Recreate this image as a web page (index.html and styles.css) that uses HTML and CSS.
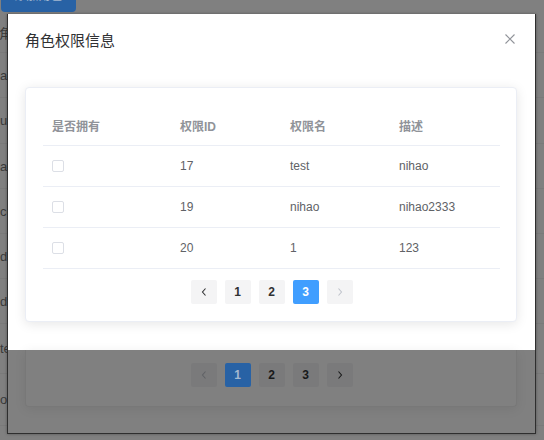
FILE: index.html
```html
<!DOCTYPE html>
<html lang="zh">
<head>
<meta charset="utf-8">
<title>角色权限信息</title>
<link rel="stylesheet" href="styles.css">
</head>
<body>
<div class="page">
  <div class="topbtn">添加角色</div>
  <div class="list">
    <div class="row h41"><span class="lbl cjk">角色</span></div>
    <div class="row h45"><span class="lbl">admin</span></div>
    <div class="row h46"><span class="lbl">user</span></div>
    <div class="row h45"><span class="lbl">abc</span></div>
    <div class="row h45"><span class="lbl">cc</span></div>
    <div class="row h45"><span class="lbl">dd</span></div>
    <div class="row h45"><span class="lbl">dd</span></div>
    <div class="row h50"><span class="lbl">test</span></div>
    <div class="row h52"><span class="lbl">oo</span></div>
  </div>
</div>

<div class="frame">
  <div class="dialog">
    <div class="dlg-header">
      <span class="dlg-title">角色权限信息</span>
      <span class="dlg-close">
        <svg width="12" height="12" viewBox="0 0 12 12"><path d="M1.5 1.5L10.5 10.5M10.5 1.5L1.5 10.5" stroke="#909399" stroke-width="1.1" fill="none"/></svg>
      </span>
    </div>
    <div class="dlg-body">
      <div class="card">
        <div class="table">
          <div class="tr th">
            <div class="td">是否拥有</div>
            <div class="td">权限ID</div>
            <div class="td">权限名</div>
            <div class="td">描述</div>
          </div>
          <div class="tr">
            <div class="td"><span class="cb"></span></div>
            <div class="td">17</div>
            <div class="td">test</div>
            <div class="td">nihao</div>
          </div>
          <div class="tr">
            <div class="td"><span class="cb"></span></div>
            <div class="td">19</div>
            <div class="td">nihao</div>
            <div class="td">nihao2333</div>
          </div>
          <div class="tr">
            <div class="td"><span class="cb"></span></div>
            <div class="td">20</div>
            <div class="td">1</div>
            <div class="td">123</div>
          </div>
        </div>
        <div class="pager">
          <span class="pbtn"><svg width="8" height="10" viewBox="0 0 8 10"><path d="M5.5 1.5L2.5 5L5.5 8.5" stroke="#303133" stroke-width="1.1" fill="none"/></svg></span>
          <span class="pbtn">1</span>
          <span class="pbtn">2</span>
          <span class="pbtn active">3</span>
          <span class="pbtn"><svg width="8" height="10" viewBox="0 0 8 10"><path d="M2.5 1.5L5.5 5L2.5 8.5" stroke="#c0c4cc" stroke-width="1.1" fill="none"/></svg></span>
        </div>
      </div>
    </div>
  </div>
  <div class="under">
    <div class="ucard">
      <div class="pager dim">
        <span class="pbtn"><svg width="8" height="10" viewBox="0 0 8 10"><path d="M5.5 1.5L2.5 5L5.5 8.5" stroke="#606266" stroke-width="1.1" fill="none"/></svg></span>
        <span class="pbtn active">1</span>
        <span class="pbtn">2</span>
        <span class="pbtn">3</span>
        <span class="pbtn"><svg width="8" height="10" viewBox="0 0 8 10"><path d="M2.5 1.5L5.5 5L2.5 8.5" stroke="#18191a" stroke-width="1.1" fill="none"/></svg></span>
      </div>
    </div>
  </div>
</div>
</body>
</html>
```

FILE: styles.css
```css
* { box-sizing: border-box; }

html, body {
  margin: 0;
  padding: 0;
}

body {
  width: 544px;
  height: 440px;
  overflow: hidden;
  position: relative;
  background: #808080;
  font-family: "Liberation Sans", "Noto Sans CJK SC", sans-serif;
}

/* underlying (dimmed) page */
.topbtn {
  width: 75px;
  height: 32px;
  margin: -20px 0 0 1px;
  background: #2862a5;
  border-radius: 4px;
  color: #a4b8d0;
  font-size: 12px;
  line-height: 32px;
  text-align: center;
}

.list {
  width: 100%;
}

.row {
  display: flex;
  align-items: center;
  border-bottom: 1px solid #7a7a7a;
  font-size: 13px;
  color: #3a3a3a;
  white-space: nowrap;
}

.lbl {
  display: block;
  width: 7px;
  overflow: hidden;
}

.row .cjk {
  margin-left: -1px;
  width: 8px;
}

.h41 { height: 41px; }
.h45 { height: 45px; }
.h46 { height: 46px; }
.h50 { height: 50px; }
.h52 { height: 52px; }

/* window frame over the page */
.frame {
  position: absolute;
  left: 7px;
  top: 14px;
  width: 529px;
  height: 420px;
  border: 1px solid #2e2e2e;
  border-top: 0;
  background: #808080;
  display: flex;
  flex-direction: column;
  box-shadow: 0 0 3px rgba(0, 0, 0, 0.35);
}

.dialog {
  height: 336px;
  flex: none;
  background: #ffffff;
  padding: 0 18px 0 17px;
}

.dlg-header {
  display: flex;
  justify-content: space-between;
  align-items: flex-start;
  padding-top: 15px;
}

.dlg-title {
  font-size: 15px;
  line-height: 24px;
  color: #303133;
}

.dlg-close {
  display: block;
  width: 12px;
  height: 12px;
  margin-top: 4px;
  margin-right: 1px;
}

.dlg-close svg {
  display: block;
}

.dlg-body {
  padding-top: 34px;
}

.card {
  border: 1px solid #ebeef5;
  border-radius: 4px;
  background: #ffffff;
  box-shadow: 0 2px 12px 0 rgba(0, 0, 0, 0.1);
  padding: 18px 16px 17px 17px;
}

.table {
  font-size: 12px;
  color: #606266;
}

.tr {
  display: grid;
  grid-template-columns: 128px 110px 109px 1fr;
  height: 41px;
  border-bottom: 1px solid #ebeef5;
  align-items: center;
}

.tr.th {
  height: 40px;
  color: #909399;
  font-weight: bold;
}

.td {
  padding-left: 9px;
  white-space: nowrap;
  display: flex;
  align-items: center;
}

.cb {
  display: block;
  width: 12px;
  height: 12px;
  border: 1px solid #dcdfe6;
  border-radius: 2px;
  background: #ffffff;
}

.pager {
  display: flex;
  justify-content: center;
  gap: 8px;
  margin-top: 11px;
}

.pbtn {
  width: 26px;
  height: 24px;
  border-radius: 2px;
  background: #f4f4f5;
  color: #303133;
  font-size: 12px;
  font-weight: bold;
  display: flex;
  align-items: center;
  justify-content: center;
}

.pbtn.active {
  background: #409eff;
  color: #ffffff;
}

/* dimmed card below the dialog */
.under {
  flex: 1;
  padding: 0 18px 0 17px;
}

.ucard {
  border: 1px solid #787878;
  border-top: 0;
  border-radius: 0 0 4px 4px;
  padding: 13px 16px 19px 17px;
  box-shadow: 0 2px 12px 0 rgba(0, 0, 0, 0.08);
}

.pager.dim {
  margin-top: 0;
}

.pager.dim .pbtn {
  background: #7a7a7b;
  color: #18191a;
}

.pager.dim .pbtn.active {
  background: #2862a5;
  color: #a4b8d0;
}
```
